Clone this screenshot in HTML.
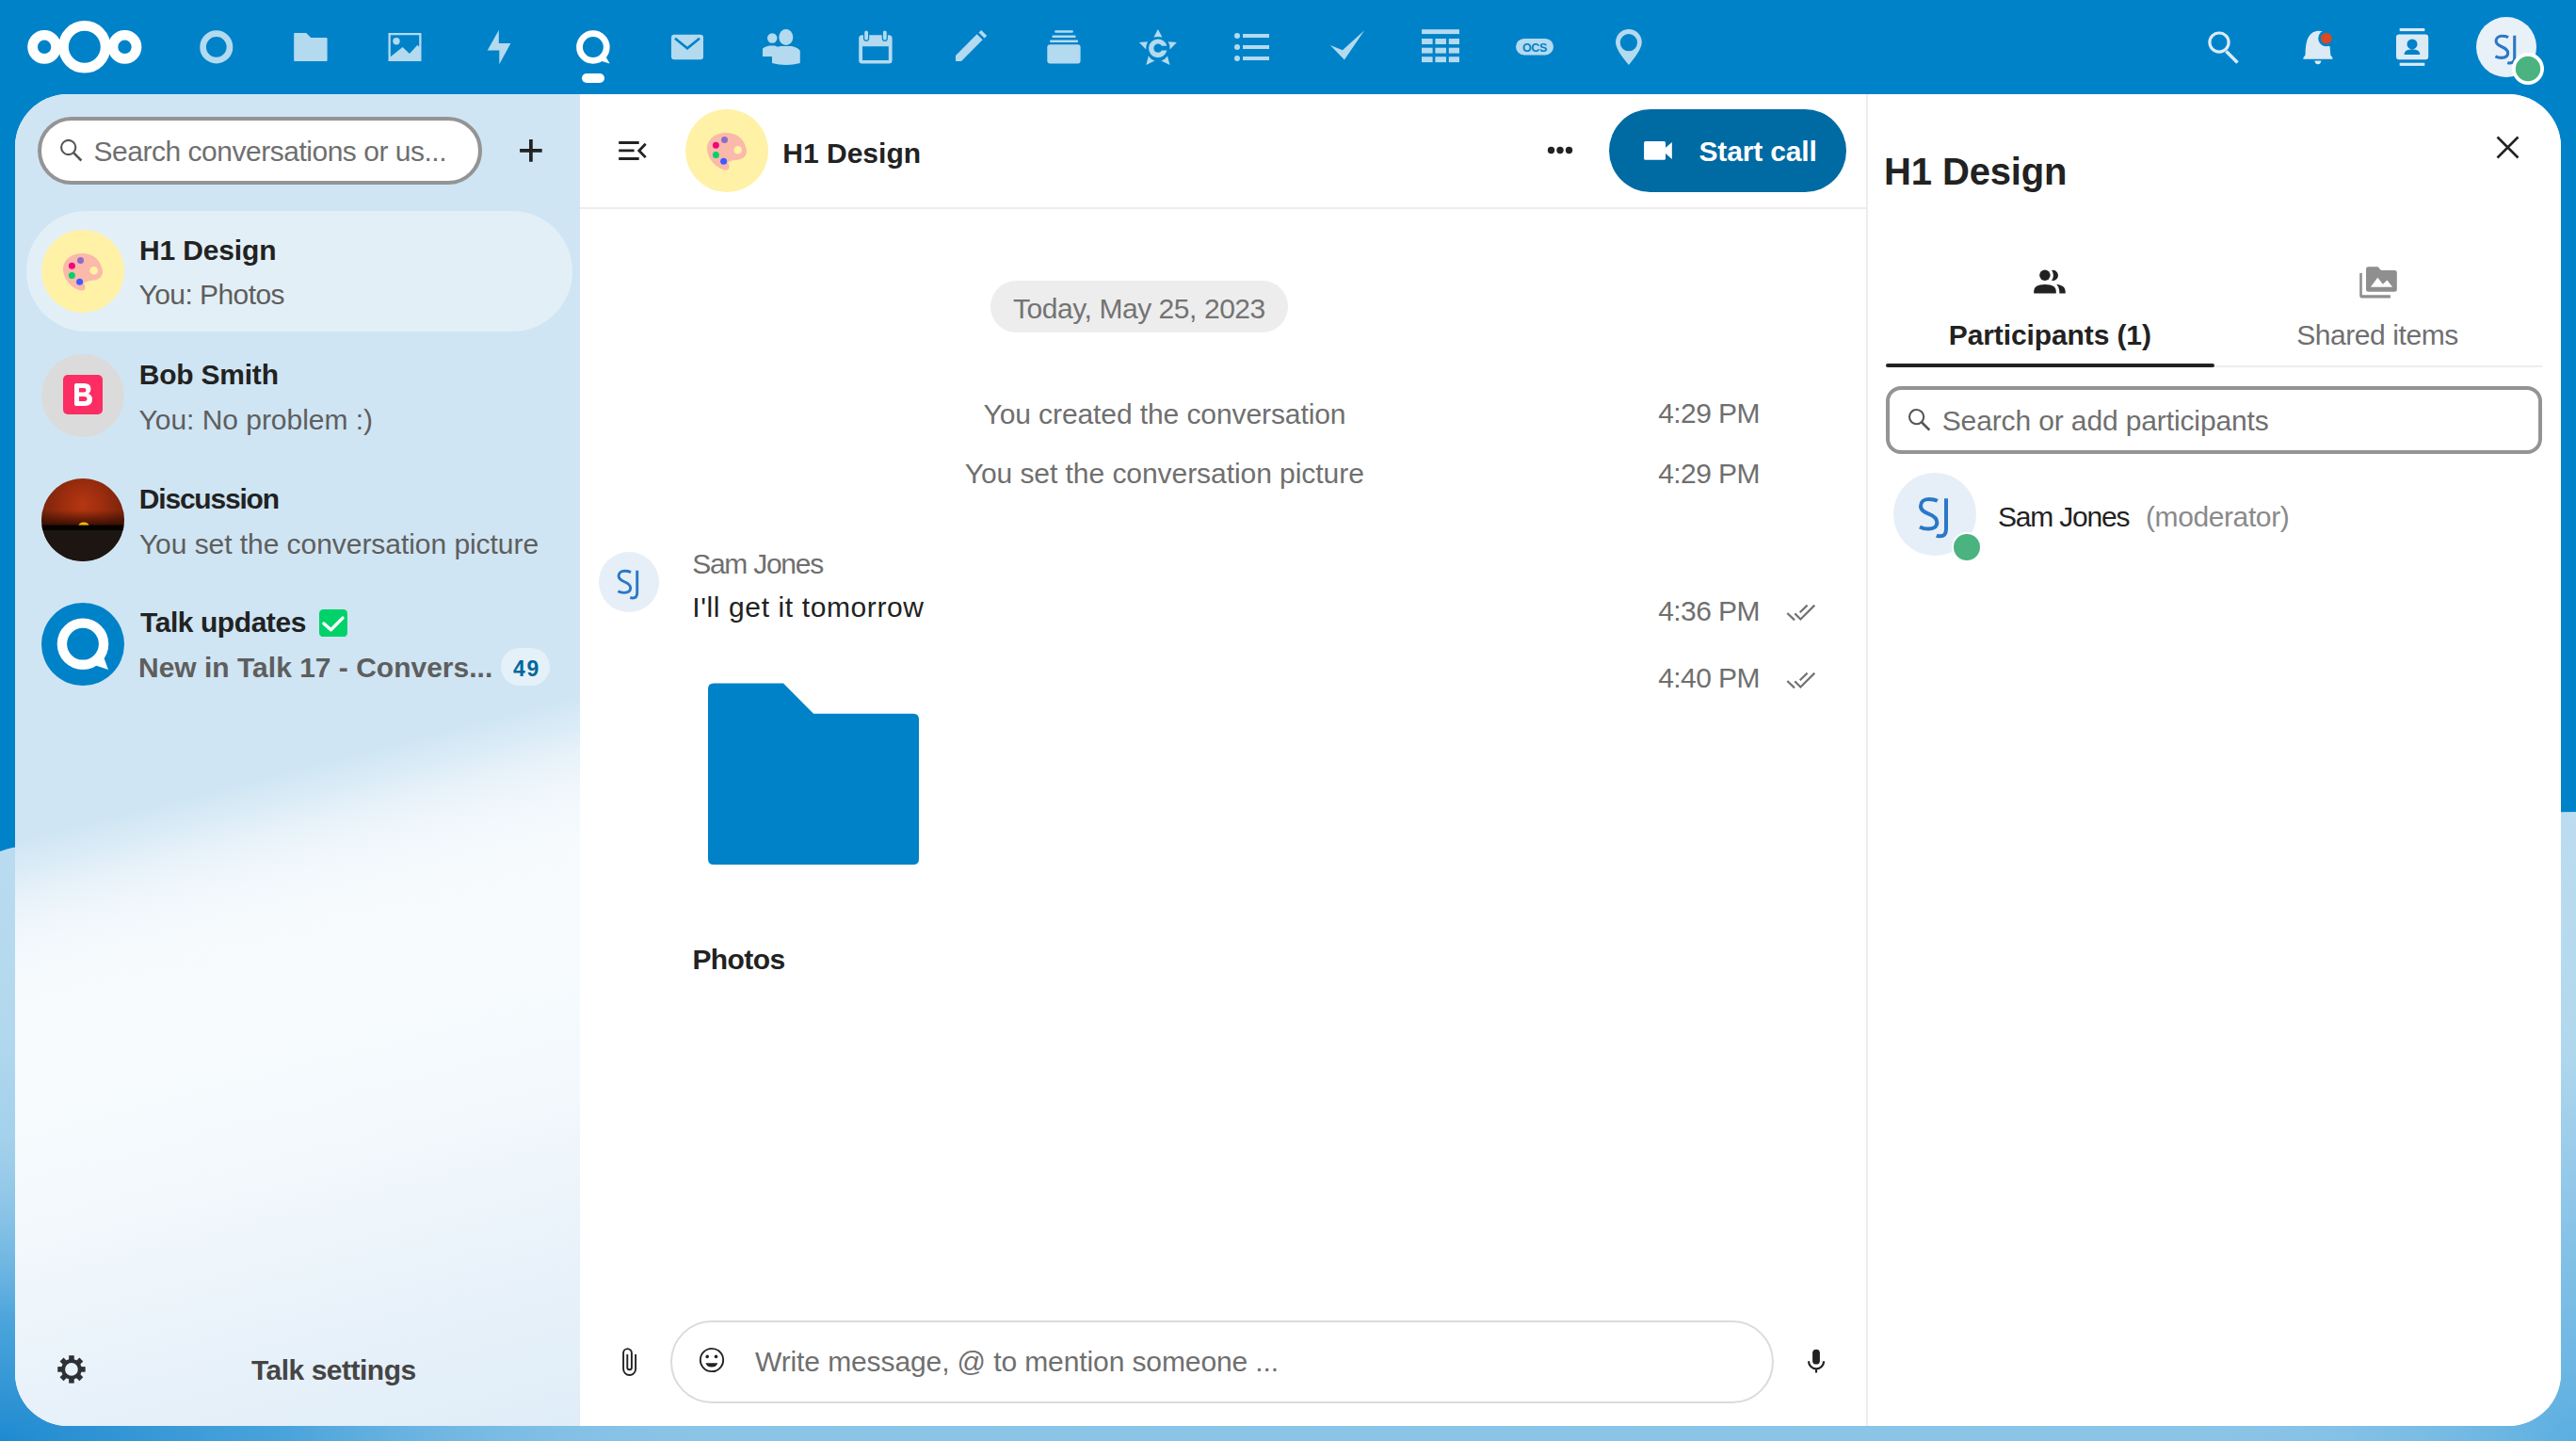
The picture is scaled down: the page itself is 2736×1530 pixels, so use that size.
<!DOCTYPE html>
<html><head><meta charset="utf-8">
<style>
*{box-sizing:border-box;margin:0;padding:0}
html,body{width:2736px;height:1530px;overflow:hidden}
body{position:relative;font-family:"Liberation Sans",sans-serif;color:#222;
 background:#0082c9;}
.abs{position:absolute}
.t{position:absolute;line-height:0;white-space:nowrap}
#header{left:0;top:0;width:2736px;height:100px;background:#0082c9}
#content{left:16px;top:100px;width:2704px;height:1414px;border-radius:56px;overflow:hidden;background:#fff}
#nav{left:0;top:0;width:600px;height:1414px;
 background:linear-gradient(165.5deg,#cfe5f3 0%,#cfe5f3 50.5%,#d9ebf6 52.3%,#e6f1f9 54.2%,#f0f7fc 56.5%,#f6fafd 60%,#f7fbfe 68%,#f2f8fc 78%,#e9f2fa 88%,#dfedf8 100%);}
#side{left:1966px;top:0;width:738px;height:1414px;background:#fff;border-left:2px solid #ededed}
</style></head>
<body>
<svg class="abs" style="left:0;top:0" width="2736" height="1530" viewBox="0 0 2736 1530">
<defs>
<linearGradient id="cl" x1="0" y1="860" x2="0" y2="1530" gradientUnits="userSpaceOnUse">
<stop offset="0" stop-color="#bcdcf0"/><stop offset="0.35" stop-color="#b2d8ee"/><stop offset="0.7" stop-color="#94c9e9"/><stop offset="1" stop-color="#8ac4e7"/></linearGradient>
<radialGradient id="dk" cx="0" cy="1530" r="320" gradientUnits="userSpaceOnUse" gradientTransform="translate(0 1530) scale(2.4 1) translate(0 -1530)">
<stop offset="0" stop-color="#1f8ad0"/><stop offset="0.4" stop-color="#3f9ed9" stop-opacity="0.85"/><stop offset="1" stop-color="#8ac4e7" stop-opacity="0"/></radialGradient>
<radialGradient id="dk2" cx="2736" cy="1530" r="400" gradientUnits="userSpaceOnUse">
<stop offset="0" stop-color="#5aaee0"/><stop offset="1" stop-color="#8ac4e7" stop-opacity="0"/></radialGradient>
</defs>
<rect width="2736" height="1530" fill="#0082c9"/>
<path d="M0 904Q20 896 40 900L2736 862V1530H0Z" fill="url(#cl)"/>
<rect x="0" y="900" width="2736" height="630" fill="url(#dk)"/>
<rect x="0" y="900" width="2736" height="630" fill="url(#dk2)"/>
</svg>
<div id="header" class="abs"><svg class="abs" style="left:0;top:0" width="2736" height="100" viewBox="0 0 2736 100">
<g fill="none" stroke="#fff" stroke-width="10.7">
<circle cx="89.8" cy="49.8" r="22.35"/><circle cx="47.1" cy="49.8" r="12.55"/><circle cx="132.5" cy="49.8" r="12.55"/>
</g>
<g fill="#b3daef">
<circle cx="229.8" cy="49.9" r="14.2" fill="none" stroke="#b3daef" stroke-width="6.7"/>
<path d="M313.2 34.9H325.2L330.2 40H346.6Q347.6 40 347.6 41V63.9Q347.6 64.9 346.6 64.9H313.2Q312.2 64.9 312.2 63.9V35.9Q312.2 34.9 313.2 34.9Z"/>
<path fill-rule="evenodd" d="M412.5 34.9H447.5V64.9H412.5ZM414.8 37.2V60.2L427.6 50L435 57.1L443.4 47.8L445.2 49.8V37.2Z"/>
<circle cx="421" cy="43.7" r="3.7"/>
<path d="M529.8 31.9V46H542.4L530.3 68.2V53.6H517.7Z"/>
</g>
<g fill="#fff">
<circle cx="629.9" cy="50" r="14.35" fill="none" stroke="#fff" stroke-width="6.8"/>
<path d="M641 56L647.6 67.4L636 64Z"/>
<rect x="618" y="78" width="24" height="10" rx="5"/>
</g>
<g fill="#b3daef">
<rect x="713" y="36.7" width="34" height="26.5" rx="3"/>
<path d="M717 40.7L730 51.3L743 40.7" fill="none" stroke="#0082c9" stroke-width="2.6"/>
<circle cx="820.2" cy="40.5" r="5.2"/>
<path d="M810 51.5Q812 49.5 817 48.5L823 48.5Q826 49.5 828 51V60H810Z"/>
<ellipse cx="834.8" cy="39.5" rx="7.5" ry="8.5"/>
<path d="M820 53.5Q822 50.5 829 49L841 49Q848 50.5 849.8 54V67Q835 71 820 67Z"/>
<path fill-rule="evenodd" d="M915.7 37.2H944.1Q947.6 37.2 947.6 40.7V63.9Q947.6 67.4 944.1 67.4H915.7Q912.2 67.4 912.2 63.9V40.7Q912.2 37.2 915.7 37.2ZM916 49.3V63.9H943.8V49.3Z"/>
<rect x="917.6" y="32" width="5" height="11.2" rx="2.5" stroke="#0082c9" stroke-width="1.2"/>
<rect x="937.3" y="32" width="5" height="11.2" rx="2.5" stroke="#0082c9" stroke-width="1.2"/>
<path d="M1015 58.9L1037.6 36.3L1043.6 42.3L1021 64.9H1015Z"/>
<path d="M1039.5 34.4L1042.2 31.9L1048.2 37.9L1045.5 40.4Z"/>
<rect x="1120.2" y="32.3" width="19.7" height="2.4" rx="1.2"/>
<rect x="1117.4" y="37.4" width="25.2" height="2.5" rx="1.2"/>
<rect x="1115" y="42.4" width="30.1" height="2.5" rx="1.2"/>
<rect x="1112.3" y="47.3" width="35.3" height="20.1" rx="3"/>
<path fill-rule="evenodd" d="M1229.9 41.5A9.8 9.8 0 1 0 1239.4 53.5H1233.9A4.6 4.6 0 1 1 1233.9 48.8H1239.4A9.8 9.8 0 0 0 1229.9 41.5Z"/>
<path d="M1229.9 31.1L1234.4 39.5Q1229.9 38.5 1225.4 39.5Z"/>
<path d="M1209.9 45L1219 44.2Q1217 47.5 1217.2 52.5Z"/>
<path d="M1249.9 45L1240.8 44.2Q1242.8 47.5 1242.6 52.5Z"/>
<path d="M1217.3 69L1219.8 59.5Q1222 63 1226.5 64.5Z"/>
<path d="M1242.5 69L1240 59.5Q1237.8 63 1233.3 64.5Z"/>
<circle cx="1314" cy="38" r="3"/><circle cx="1314" cy="50" r="3"/><circle cx="1314" cy="61.9" r="3"/>
<rect x="1320" y="36" width="28" height="4"/><rect x="1320" y="48" width="28" height="4"/><rect x="1320" y="60" width="28" height="4"/>
<path d="M1412.9 47.9L1425.9 53.3L1449.2 32.3L1427.9 63.6Z"/>
<rect x="1510" y="31.2" width="40" height="4.9"/>
<rect x="1510" y="41" width="11.6" height="6"/><rect x="1524.4" y="41" width="11.6" height="6"/><rect x="1538.8" y="41" width="11.2" height="6"/>
<rect x="1510" y="50.7" width="11.6" height="5.9"/><rect x="1524.4" y="50.7" width="11.6" height="5.9"/><rect x="1538.8" y="50.7" width="11.2" height="5.9"/>
<rect x="1510" y="60.2" width="11.6" height="5.9"/><rect x="1524.4" y="60.2" width="11.6" height="5.9"/><rect x="1538.8" y="60.2" width="11.2" height="5.9"/>
<rect x="1610" y="41" width="40" height="17.4" rx="8.7"/>
<text x="1630" y="54.6" text-anchor="middle" font-family="Liberation Sans" font-weight="700" font-size="12.5" fill="#0082c9" letter-spacing="-0.3">OCS</text>
<path fill-rule="evenodd" d="M1729.9 30.9A13.9 13.9 0 0 0 1716 44.8Q1716 53 1729.9 68.9Q1743.8 53 1743.8 44.8A13.9 13.9 0 0 0 1729.9 30.9ZM1729.9 36.1A9.1 9.1 0 1 1 1729.9 54.3A9.1 9.1 0 1 1 1729.9 36.1Z"/>
</g>
<g fill="#dbeaf5">
<circle cx="2357" cy="45.1" r="10.1" fill="none" stroke="#dbeaf5" stroke-width="3.2"/>
<path d="M2364.5 54.5L2376.5 66.5" stroke="#dbeaf5" stroke-width="3.6"/>
<path d="M2461.9 32.7Q2466 32.7 2467 34A9 9 0 0 0 2474.5 49Q2475 53 2475.3 58.5L2477.4 61.2V62.8H2446.4V61.2L2448.5 58.5Q2448.5 47 2451 41Q2454 34.5 2459 33.5Q2460 32.7 2461.9 32.7Z"/>
<path d="M2458.4 64.6H2465.4Q2465 68.2 2461.9 68.2Q2458.8 68.2 2458.4 64.6Z"/>
<path fill-rule="evenodd" d="M2548 36.6H2576.2Q2579.2 36.6 2579.2 39.6V60.2Q2579.2 63.2 2576.2 63.2H2548Q2545 63.2 2545 60.2V39.6Q2545 36.6 2548 36.6ZM2562 41.4A5.5 5.5 0 1 0 2562 52.4A5.5 5.5 0 1 0 2562 41.4ZM2553.5 57.9H2570.3Q2570.3 52.6 2562 52.6Q2553.5 52.6 2553.5 57.9Z"/>
<rect x="2548.7" y="30" width="26.6" height="3.1"/>
<rect x="2548.7" y="66.7" width="26.6" height="3.2"/>
</g>
<circle cx="2470.8" cy="40.7" r="8.6" fill="#0082c9"/><circle cx="2470.8" cy="40.7" r="5.8" fill="#dd4a1e"/>
<circle cx="2662" cy="50" r="32" fill="#e9f1f8"/>
<g transform="translate(2662 50) scale(0.7273)" fill="none" stroke="#2a78c6" stroke-width="4.3">
<path d="M2.8 -14.3C0 -15.8 -3.5 -16.1 -6.5 -16.1C-11.8 -16.1 -15 -13 -15 -8.8C-15 -4.3 -11.2 -2.3 -6.5 -0.3C-1.6 1.7 2.3 4.2 2.3 8.7C2.3 13.2 -1.4 15.6 -7 15.6C-10.3 15.6 -13.4 14.9 -16 13.5"/>
<path d="M12 -16.7V15.5C12 21.5 9.8 23.3 5.5 23.3C4.3 23.3 3 23.1 1.8 22.6"/>
</g>
<circle cx="2685" cy="73" r="17" fill="#fff"/>
<circle cx="2685" cy="73" r="13.2" fill="#4ab37f"/>
</svg></div>
<div id="content" class="abs">
  <div id="nav" class="abs"></div>
  <div id="side" class="abs"></div>
</div>
<div class="abs" style="left:40px;top:124px;width:472px;height:72px;border:4px solid #949494;border-radius:36px;background:#fff"></div>
<svg class="abs" style="left:60px;top:144px" width="32" height="32" viewBox="60 144 32 32">
<circle cx="72.7" cy="156.5" r="7.6" fill="none" stroke="#555" stroke-width="2.1"/>
<path d="M78.3 162.4L86.4 170.5" stroke="#555" stroke-width="2.6"/></svg>
<div class="t" style="left:99.50px;top:161.30px;font-size:30px;font-weight:400;color:#6f6f6f;letter-spacing:-0.482px;">Search conversations or us...</div>
<svg class="abs" style="left:548px;top:144px" width="32" height="32" viewBox="548 144 32 32">
<path d="M563.9 148.1V171.7M552.1 159.9H575.7" stroke="#222" stroke-width="3.7"/></svg>
<div class="abs" style="left:28px;top:224px;width:580px;height:128px;border-radius:64px;background:#e3eff6"></div>
<svg class="abs" style="left:44px;top:244px" width="88" height="88" viewBox="0 0 88 88">
<circle cx="44" cy="44" r="44" fill="#fff1a6"/>
<path fill="#fbb9aa" d="M44.5 25C33 24.5 23 31 23 41.5C23 52 32 62.5 42 64.5Q46.5 65 46.5 61.5Q46.5 58.5 45 56.5Q47 54.5 51.5 54Q60 54 63.5 49.5Q66.5 45 63.5 38.5Q59 26 44.5 25Z"/>
<circle cx="55.7" cy="43.2" r="4.3" fill="#fff1a6"/>
<circle cx="41.5" cy="32.4" r="3.5" fill="#8e6bc9"/>
<circle cx="32.4" cy="38.3" r="3.5" fill="#f0067f"/>
<circle cx="32.4" cy="48.5" r="3.5" fill="#00d26a"/>
<circle cx="40.6" cy="55.3" r="3.5" fill="#3e5cff"/>
</svg>
<div class="t" style="left:148.10px;top:265.71px;font-size:30px;font-weight:700;color:#222;letter-spacing:-0.162px;">H1 Design</div>
<div class="t" style="left:147.50px;top:313.46px;font-size:30px;font-weight:400;color:#5e5e5e;letter-spacing:-0.560px;">You: Photos</div>
<svg class="abs" style="left:44px;top:376px" width="88" height="88" viewBox="0 0 88 88">
<circle cx="44" cy="44" r="44" fill="#dbdbdb"/>
<rect x="23" y="22" width="42" height="42" rx="5" fill="#fb2d62"/>
<path fill="#fff" fill-rule="evenodd" d="M37 31H45.5Q52.5 31 52.5 37Q52.5 40.5 50 42Q54 43.5 54 48Q54 55 46 55H37Q35 55 35 53V33Q35 31 37 31ZM40 36V40.5H45Q47.5 40.5 47.5 38.3Q47.5 36 45 36ZM40 45V50H45.5Q48.5 50 48.5 47.5Q48.5 45 45.5 45Z"/>
</svg>
<div class="t" style="left:147.70px;top:397.61px;font-size:30px;font-weight:700;color:#222;letter-spacing:-0.212px;">Bob Smith</div>
<div class="t" style="left:147.50px;top:446.00px;font-size:30px;font-weight:400;color:#5e5e5e;letter-spacing:-0.029px;">You: No problem :)</div>
<svg class="abs" style="left:44px;top:508px" width="88" height="88" viewBox="0 0 88 88">
<defs><radialGradient id="sky" cx="44" cy="28" r="52" gradientUnits="userSpaceOnUse"><stop offset="0" stop-color="#b53712"/><stop offset="0.45" stop-color="#9a2c0e"/><stop offset="1" stop-color="#6a220a"/></radialGradient>
<linearGradient id="dusk" x1="0" y1="34" x2="0" y2="50" gradientUnits="userSpaceOnUse"><stop offset="0" stop-color="#2a0a02" stop-opacity="0"/><stop offset="1" stop-color="#2a0a02" stop-opacity="0.85"/></linearGradient>
<linearGradient id="sun" x1="0" y1="46" x2="0" y2="50" gradientUnits="userSpaceOnUse"><stop offset="0" stop-color="#ffd400"/><stop offset="1" stop-color="#f0a000"/></linearGradient>
<clipPath id="cc"><circle cx="44" cy="44" r="44"/></clipPath></defs>
<g clip-path="url(#cc)">
<rect width="88" height="88" fill="url(#sky)"/>
<rect y="34" width="88" height="16" fill="url(#dusk)"/>
<path d="M39.5 50A5.5 3.6 0 0 1 50.5 50Z" fill="url(#sun)"/>
<rect y="49.6" width="88" height="5.4" fill="#050202"/>
<rect y="55" width="88" height="33" fill="#1c1511"/>
</g></svg>
<div class="t" style="left:147.80px;top:529.61px;font-size:30px;font-weight:700;color:#222;letter-spacing:-1.200px;">Discussion</div>
<div class="t" style="left:147.90px;top:577.61px;font-size:30px;font-weight:400;color:#5e5e5e;letter-spacing:-0.052px;">You set the conversation picture</div>
<svg class="abs" style="left:44px;top:640px" width="88" height="88" viewBox="0 0 88 88">
<circle cx="44" cy="44" r="44" fill="#0082c9"/>
<circle cx="44" cy="43.7" r="22.1" fill="none" stroke="#fff" stroke-width="10.4"/>
<path d="M64 52L71 71.1L56 66Z" fill="#fff"/>
</svg>
<div class="t" style="left:149.00px;top:661.31px;font-size:30px;font-weight:700;color:#222;letter-spacing:-0.436px;">Talk updates</div>
<svg class="abs" style="left:339px;top:646.7px" width="30" height="29.4" viewBox="0 0 30 29.4">
<rect width="30" height="29.4" rx="4.5" fill="#00d26a"/>
<path d="M4.9 15L12.5 21.8L25 9.1" fill="none" stroke="#fff" stroke-width="3.4" stroke-linecap="round" stroke-linejoin="round"/></svg>
<div class="t" style="left:147.00px;top:709.21px;font-size:30px;font-weight:700;color:#5e5e5e;letter-spacing:0.000px;">New in Talk 17 - Convers...</div>
<div class="abs" style="left:532px;top:688px;width:52px;height:40px;border-radius:20px;background:rgba(255,255,255,0.45)"></div>
<div class="t" style="left:545.00px;top:709.73px;font-size:23px;font-weight:700;color:#00679e;letter-spacing:1.600px;">49</div>
<svg class="abs" style="left:56px;top:1434px" width="40" height="40" viewBox="56 1434 40 40">
<g transform="translate(75.95 1453.9)" fill="#2d3034">
<path fill-rule="evenodd" d="M0 -10.8A10.8 10.8 0 1 1 0 10.8A10.8 10.8 0 1 1 0 -10.8ZM0 -6.85A6.85 6.85 0 1 0 0 6.85A6.85 6.85 0 1 0 0 -6.85Z"/>
<rect x="-2.8" y="-14.7" width="5.6" height="6"/><rect x="-2.8" y="-14.7" width="5.6" height="6" transform="rotate(45)"/>
<rect x="-2.8" y="-14.7" width="5.6" height="6" transform="rotate(90)"/><rect x="-2.8" y="-14.7" width="5.6" height="6" transform="rotate(135)"/>
<rect x="-2.8" y="-14.7" width="5.6" height="6" transform="rotate(180)"/><rect x="-2.8" y="-14.7" width="5.6" height="6" transform="rotate(225)"/>
<rect x="-2.8" y="-14.7" width="5.6" height="6" transform="rotate(270)"/><rect x="-2.8" y="-14.7" width="5.6" height="6" transform="rotate(315)"/>
</g></svg>
<div class="t" style="left:267.00px;top:1454.61px;font-size:30px;font-weight:700;color:#454545;letter-spacing:-0.500px;">Talk settings</div>
<svg class="abs" style="left:650px;top:144px" width="42" height="32" viewBox="650 144 42 32">
<g stroke="#222" stroke-width="2.8" fill="none">
<path d="M657.2 151.5H678.7M657.2 159.9H673.6M657.2 168.5H678.7"/>
<path d="M685.7 152.8L678.8 159.9L685.7 167.1"/></g></svg>
<svg class="abs" style="left:728px;top:116px" width="88" height="88" viewBox="0 0 88 88">
<circle cx="44" cy="44" r="44" fill="#fff1a6"/>
<path fill="#fbb9aa" d="M44.5 25C33 24.5 23 31 23 41.5C23 52 32 62.5 42 64.5Q46.5 65 46.5 61.5Q46.5 58.5 45 56.5Q47 54.5 51.5 54Q60 54 63.5 49.5Q66.5 45 63.5 38.5Q59 26 44.5 25Z"/>
<circle cx="55.7" cy="43.2" r="4.3" fill="#fff1a6"/>
<circle cx="41.5" cy="32.4" r="3.5" fill="#8e6bc9"/>
<circle cx="32.4" cy="38.3" r="3.5" fill="#f0067f"/>
<circle cx="32.4" cy="48.5" r="3.5" fill="#00d26a"/>
<circle cx="40.6" cy="55.3" r="3.5" fill="#3e5cff"/>
</svg>
<div class="t" style="left:831.20px;top:162.60px;font-size:30px;font-weight:700;color:#222;letter-spacing:0.025px;">H1 Design</div>
<div class="abs" style="left:616px;top:220px;width:1366px;height:2px;background:#ededed"></div>
<svg class="abs" style="left:1640px;top:150px" width="34" height="20" viewBox="1640 150 34 20">
<circle cx="1647.5" cy="159.5" r="3.7" fill="#222"/><circle cx="1657" cy="159.5" r="3.7" fill="#222"/><circle cx="1666.5" cy="159.5" r="3.7" fill="#222"/></svg>
<div class="abs" style="left:1709px;top:116px;width:252px;height:88px;border-radius:44px;background:#006aa3"></div>
<svg class="abs" style="left:1740px;top:145px" width="40" height="30" viewBox="1740 145 40 30">
<rect x="1746.1" y="150" width="22.9" height="19.8" rx="1.6" fill="#fff"/>
<path d="M1768.5 157.2L1775.8 151V169L1768.5 162.5Z" fill="#fff"/></svg>
<div class="t" style="left:1804.50px;top:160.60px;font-size:30px;font-weight:700;color:#fff;letter-spacing:-0.167px;">Start call</div>
<div class="abs" style="left:1052px;top:298px;width:316px;height:55px;border-radius:28px;background:#ededed"></div>
<div class="t" style="left:1076.00px;top:327.81px;font-size:30px;font-weight:400;color:#737373;letter-spacing:-0.444px;">Today, May 25, 2023</div>
<div class="t" style="left:1044.50px;top:439.61px;font-size:30px;font-weight:400;color:#6f6f6f;letter-spacing:-0.093px;">You created the conversation</div>
<div class="t" style="left:1761.20px;top:439.41px;font-size:30px;font-weight:400;color:#6f6f6f;letter-spacing:-0.567px;">4:29 PM</div>
<div class="t" style="left:1024.70px;top:502.61px;font-size:30px;font-weight:400;color:#6f6f6f;letter-spacing:-0.055px;">You set the conversation picture</div>
<div class="t" style="left:1761.20px;top:503.31px;font-size:30px;font-weight:400;color:#6f6f6f;letter-spacing:-0.567px;">4:29 PM</div>
<svg class="abs" style="left:635.6px;top:586.0px" width="64" height="64" viewBox="-32.0 -32.0 64 64">
<circle r="32.0" fill="#e6eff7"/>
<g transform="scale(0.7273)" fill="none" stroke="#2a78c6" stroke-width="4">
<path d="M2.8 -14.3C0 -15.8 -3.5 -16.1 -6.5 -16.1C-11.8 -16.1 -15 -13 -15 -8.8C-15 -4.3 -11.2 -2.3 -6.5 -0.3C-1.6 1.7 2.3 4.2 2.3 8.7C2.3 13.2 -1.4 15.6 -7 15.6C-10.3 15.6 -13.4 14.9 -16 13.5"/>
<path d="M12 -16.7V15.5C12 21.5 9.8 23.3 5.5 23.3C4.3 23.3 3 23.1 1.8 22.6"/>
</g></svg>
<div class="t" style="left:735.20px;top:599.21px;font-size:30px;font-weight:400;color:#6f6f6f;letter-spacing:-1.263px;">Sam Jones</div>
<div class="t" style="left:735.30px;top:645.40px;font-size:30px;font-weight:400;color:#222;letter-spacing:0.611px;">I'll get it tomorrow</div>
<div class="t" style="left:1761.20px;top:648.61px;font-size:30px;font-weight:400;color:#6f6f6f;letter-spacing:-0.567px;">4:36 PM</div>
<div class="t" style="left:1761.20px;top:720.31px;font-size:30px;font-weight:400;color:#6f6f6f;letter-spacing:-0.567px;">4:40 PM</div>
<svg class="abs" style="left:1894px;top:638px" width="36" height="24" viewBox="1894 638 36 24">
<g stroke="#737373" stroke-width="2.2" fill="none" transform="translate(0 0)">
<path d="M1898.3 651L1906 658.4"/><path d="M1906.3 651.4L1912.4 657.5L1927.3 642.6"/><path d="M1911.7 650.2L1919.6 642.6"/></g></svg>
<svg class="abs" style="left:1894px;top:709.8px" width="36" height="24" viewBox="1894 709.8 36 24">
<g stroke="#737373" stroke-width="2.2" fill="none" transform="translate(0 71.8)">
<path d="M1898.3 651L1906 658.4"/><path d="M1906.3 651.4L1912.4 657.5L1927.3 642.6"/><path d="M1911.7 650.2L1919.6 642.6"/></g></svg>
<svg class="abs" style="left:752px;top:725px" width="225" height="194" viewBox="752 725 225 194">
<path fill="#0082c9" d="M758 725.6H832L864 757.8H970Q976 757.8 976 763.8V912Q976 918 970 918H758Q752 918 752 912V731.6Q752 725.6 758 725.6Z"/></svg>
<div class="t" style="left:735.40px;top:1019.11px;font-size:30px;font-weight:700;color:#222;letter-spacing:-0.560px;">Photos</div>
<svg class="abs" style="left:655px;top:1428px" width="26" height="36" viewBox="655 1428 26 36">
<path d="M675.1 1437.9V1453.5A6.5 6.5 0 0 1 662.1 1453.5V1436.5A4.4 4.4 0 0 1 670.9 1436.5V1452A2.3 2.3 0 0 1 666.3 1452V1437.9" fill="none" stroke="#222" stroke-width="1.9"/></svg>
<div class="abs" style="left:712px;top:1402px;width:1172px;height:88px;border:2px solid #dbdbdb;border-radius:44px;background:#fff"></div>
<svg class="abs" style="left:740px;top:1428px" width="32" height="32" viewBox="740 1428 32 32">
<circle cx="756" cy="1444" r="12.15" fill="none" stroke="#222" stroke-width="1.9"/>
<circle cx="751.2" cy="1440.4" r="1.8" fill="#222"/><circle cx="760.5" cy="1440.4" r="1.8" fill="#222"/>
<path d="M749.4 1447.3H762.3Q761 1451.5 755.85 1451.5Q750.7 1451.5 749.4 1447.3Z" fill="#222"/></svg>
<div class="t" style="left:802.00px;top:1446.20px;font-size:30px;font-weight:400;color:#6f6f6f;letter-spacing:-0.105px;">Write message, @ to mention someone ...</div>
<svg class="abs" style="left:1915px;top:1428px" width="28" height="34" viewBox="1915 1428 28 34">
<rect x="1925.1" y="1432.7" width="7.8" height="15.9" rx="3.9" fill="#222"/>
<path d="M1921 1445.3A8.05 8.05 0 0 0 1937.1 1445.3M1929 1453.3V1457.5" fill="none" stroke="#222" stroke-width="2.2"/></svg>
<div class="t" style="left:2001.10px;top:182.04px;font-size:40px;font-weight:700;color:#222;letter-spacing:-0.150px;">H1 Design</div>
<svg class="abs" style="left:2646px;top:140px" width="36" height="34" viewBox="2646 140 36 34">
<path d="M2652.5 145.5L2674.5 167.5M2674.5 145.5L2652.5 167.5" stroke="#222" stroke-width="2.6"/></svg>
<svg class="abs" style="left:2155px;top:282px" width="44" height="34" viewBox="2155 282 44 34">
<g fill="#222">
<circle cx="2171.9" cy="292.3" r="5.7"/>
<path d="M2160.2 311.6V309Q2160.2 301.9 2172 301.9Q2183.8 301.9 2183.8 309V311.6Z"/>
<path d="M2179.1 287A5.6 5.6 0 1 1 2179.1 297.9Q2180.9 295.5 2180.9 292.3Q2180.9 289.2 2179.1 287Z"/>
<path d="M2184.2 301.7Q2193.7 303 2193.7 309V311.6H2187.3V309Q2187.3 305 2184.2 301.7Z"/>
</g></svg>
<svg class="abs" style="left:2502px;top:280px" width="48" height="40" viewBox="2502 280 48 40">
<g fill="#8f8f8f">
<path fill-rule="evenodd" d="M2515.5 283.2H2525.5L2529 287.1H2543.3Q2545.8 287.1 2545.8 289.6V307.2Q2545.8 309.7 2543.3 309.7H2515.5Q2513 309.7 2513 307.2V285.7Q2513 283.2 2515.5 283.2ZM2517.9 304.8H2541.1L2535.4 297.4L2530.9 301.7L2525.3 294.8Z"/>
<path d="M2506.2 290.1H2508.8V313.2H2538.9V316.5H2509Q2506.2 316.5 2506.2 313.7Z"/>
</g></svg>
<div class="t" style="left:2069.80px;top:355.61px;font-size:30px;font-weight:700;color:#222;letter-spacing:-0.107px;">Participants (1)</div>
<div class="t" style="left:2439.20px;top:355.61px;font-size:30px;font-weight:400;color:#6f6f6f;letter-spacing:-0.427px;">Shared items</div>
<div class="abs" style="left:2003px;top:388px;width:697px;height:2px;background:#ededed"></div>
<div class="abs" style="left:2003px;top:386px;width:349px;height:4px;background:#222;border-radius:2px"></div>
<div class="abs" style="left:2003px;top:410px;width:697px;height:72px;border:4px solid #949494;border-radius:16px;background:#fff"></div>
<svg class="abs" style="left:2022px;top:430px" width="32" height="32" viewBox="2022 430 32 32">
<circle cx="2035.6" cy="442.6" r="7.6" fill="none" stroke="#555" stroke-width="2.1"/>
<path d="M2041.2 448.5L2049.3 456.6" stroke="#555" stroke-width="2.6"/></svg>
<div class="t" style="left:2062.70px;top:446.61px;font-size:30px;font-weight:400;color:#6f6f6f;letter-spacing:-0.124px;">Search or add participants</div>
<svg class="abs" style="left:2011.0px;top:502.0px" width="88" height="88" viewBox="-44.0 -44.0 88 88">
<circle r="44.0" fill="#e6eff7"/>
<g transform="scale(1.0000)" fill="none" stroke="#2a78c6" stroke-width="4">
<path d="M2.8 -14.3C0 -15.8 -3.5 -16.1 -6.5 -16.1C-11.8 -16.1 -15 -13 -15 -8.8C-15 -4.3 -11.2 -2.3 -6.5 -0.3C-1.6 1.7 2.3 4.2 2.3 8.7C2.3 13.2 -1.4 15.6 -7 15.6C-10.3 15.6 -13.4 14.9 -16 13.5"/>
<path d="M12 -16.7V15.5C12 21.5 9.8 23.3 5.5 23.3C4.3 23.3 3 23.1 1.8 22.6"/>
</g></svg>
<div class="abs" style="left:2073px;top:565px;width:32px;height:32px;border-radius:50%;background:#fff"></div>
<div class="abs" style="left:2075px;top:567px;width:28px;height:28px;border-radius:50%;background:#4ab37f"></div>
<div class="t" style="left:2122.00px;top:548.61px;font-size:30px;font-weight:400;color:#222;letter-spacing:-1.200px;">Sam Jones</div>
<div class="t" style="left:2279.00px;top:548.61px;font-size:30px;font-weight:400;color:#8a8a8a;letter-spacing:-0.400px;">(moderator)</div>

</body></html>
